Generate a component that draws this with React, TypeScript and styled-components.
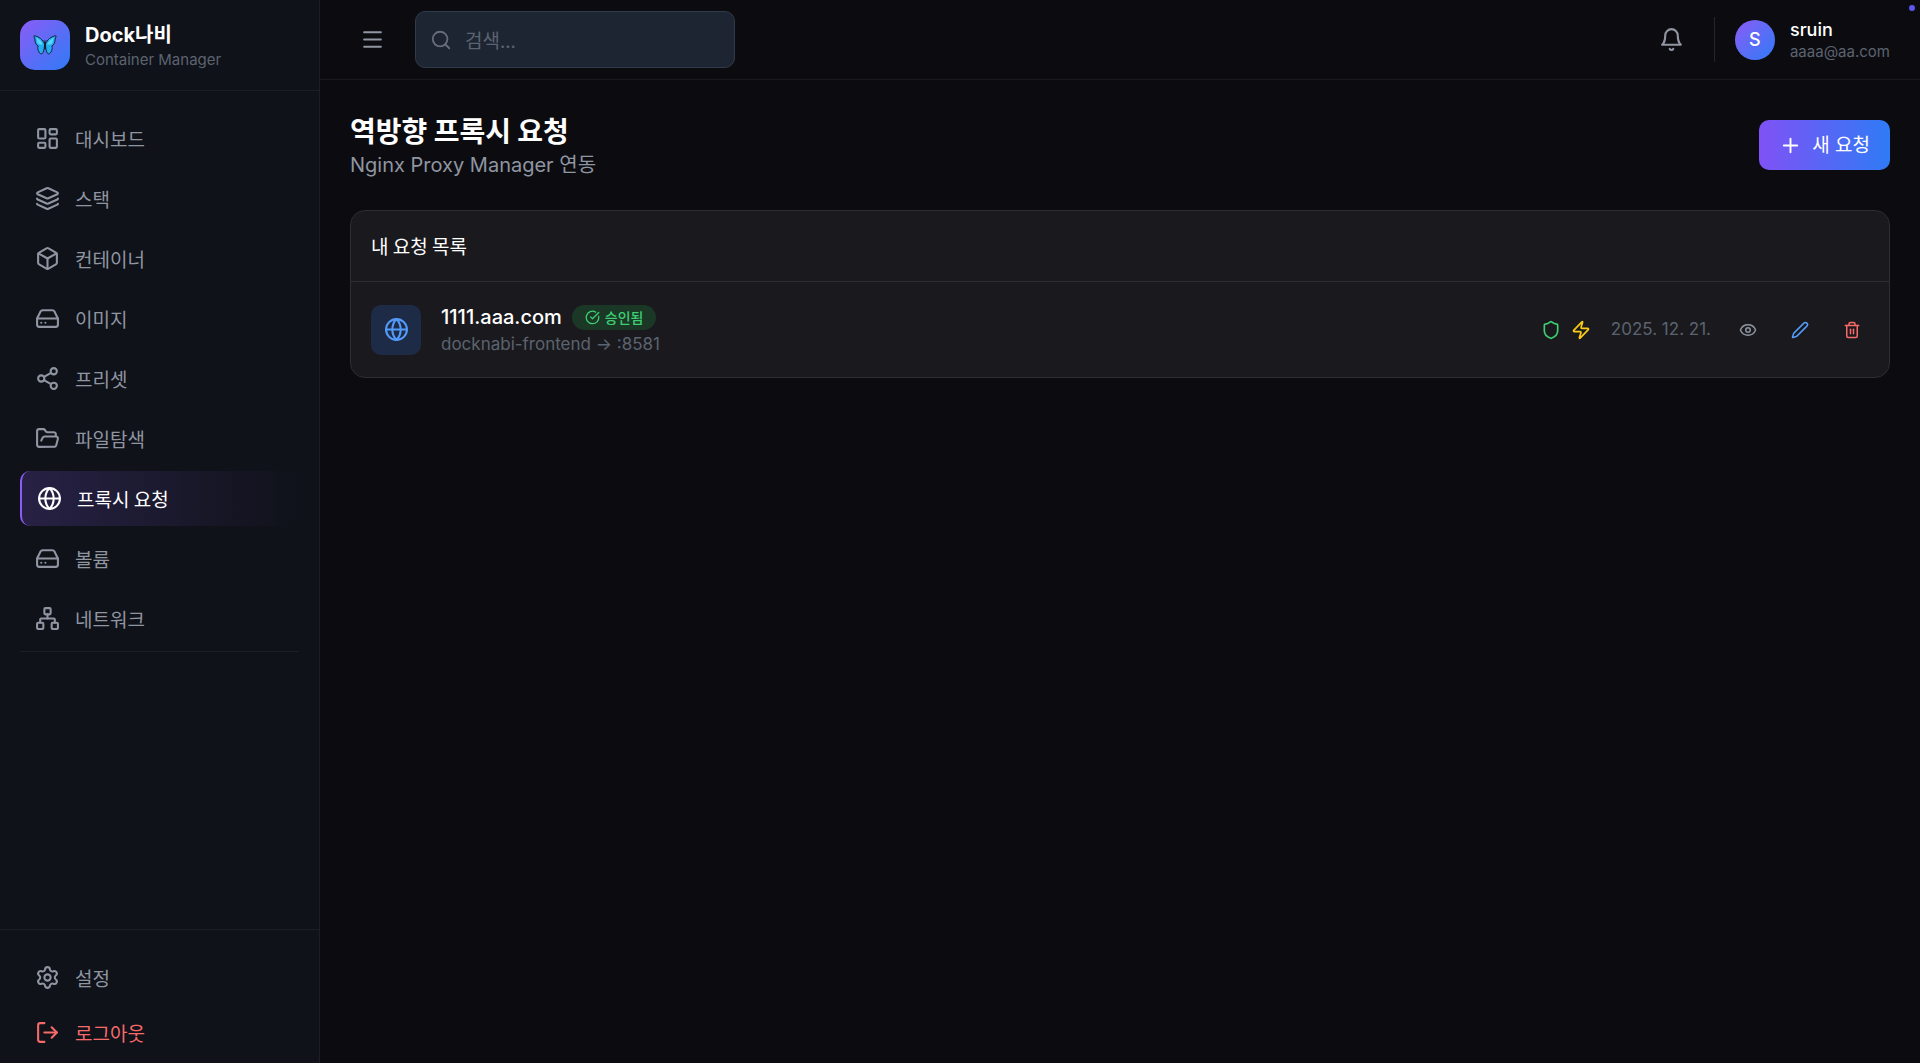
import React from "react";
import styled, { createGlobalStyle, css } from "styled-components";
import {
  LayoutDashboard,
  Layers,
  Box,
  HardDrive,
  Share2,
  FolderOpen,
  Globe,
  Network,
  Settings,
  LogOut,
  Menu,
  Search,
  Plus,
  CircleCheckBig,
  Shield,
  Zap,
  Eye,
  Pen,
  Trash2,
} from "lucide-react";

const hangul = `"Noto Sans CJK KR", sans-serif`;

const GlobalStyle = createGlobalStyle`
  * { box-sizing: border-box; margin: 0; padding: 0; }
  body {
    background: #0c0c10;
    color: #ffffff;
    font-family: Inter, "Noto Sans CJK KR", sans-serif;
    font-size: 17px;
    line-height: 25px;
  }
  button, input { font: inherit; color: inherit; border: 0; background: none; }
  button { cursor: pointer; }
  a { color: inherit; text-decoration: none; }
  ul { list-style: none; }
  svg { display: block; flex: none; }
`;

const Shell = styled.div`
  display: flex;
  min-height: 100vh;
`;

const Sidebar = styled.aside`
  display: flex;
  flex-direction: column;
  flex: none;
  width: 320px;
  height: 100vh;
  background: #0f1219;
  border-right: 1px solid #1b1e25;
`;

const Brand = styled.div`
  display: flex;
  align-items: center;
  gap: 15px;
  padding: 20px;
  border-bottom: 1px solid #1b1e25;
`;

const Logo = styled.div`
  display: grid;
  place-items: center;
  width: 50px;
  height: 50px;
  border-radius: 15px;
  background: linear-gradient(135deg, #8b5cf6, #2f7bf6);
`;

const BrandName = styled.p`
  font-size: 20px;
  line-height: 30px;
  font-weight: 700;
`;

const Caption = styled.p`
  font-size: 15px;
  line-height: 20px;
  color: #5c6370;
`;

const Nav = styled.nav`
  flex: 1;
  padding: 20px;
`;

const NavList = styled.ul`
  display: flex;
  flex-direction: column;
  gap: 5px;
`;

const NavDivider = styled.hr`
  margin-top: 5px;
  border: 0;
  border-top: 1px solid #1b1e25;
`;

const navItem = css`
  display: flex;
  align-items: center;
  gap: 15px;
  width: 100%;
  padding: 15px;
  border-radius: 10px;
  font-family: ${hangul};
  font-size: 19px;
`;

const NavLink = styled.a<{ $active?: boolean }>`
  ${navItem}
  color: #8f95a1;
  ${({ $active }) =>
    $active &&
    css`
      color: #ffffff;
      border-left: 2px solid #8b5cf6;
      background: linear-gradient(90deg, rgba(139, 92, 246, 0.2), transparent);
    `}
`;

const LogoutButton = styled.button`
  ${navItem}
  color: #f86a6a;
`;

const SidebarFooter = styled.div`
  padding: 20px 20px 3px;
  border-top: 1px solid #1b1e25;
`;

const Content = styled.div`
  flex: 1;
  min-width: 0;
`;

const Topbar = styled.header`
  display: flex;
  align-items: center;
  justify-content: space-between;
  height: 80px;
  padding: 0 30px;
  border-bottom: 1px solid #1a1a1e;
`;

const Group = styled.div<{ $gap: number }>`
  display: flex;
  align-items: center;
  gap: ${({ $gap }) => $gap}px;
`;

const IconButton = styled.button`
  padding: 10px;
  color: #8f95a1;
`;

const SearchBox = styled.label`
  display: flex;
  align-items: center;
  gap: 13px;
  width: 320px;
  padding: 15px 14px;
  border: 1px solid #2f3a4a;
  border-radius: 10px;
  background: #1d2533;
  color: #666d79;
  font-family: ${hangul};
  font-size: 19px;
`;

const SearchInput = styled.input`
  flex: 1;
  min-width: 0;
  height: 25px;
  outline: 0;
  &::placeholder { color: #5c6370; opacity: 1; }
`;

const Profile = styled.div`
  display: flex;
  align-items: center;
  gap: 15px;
  padding-left: 20px;
  border-left: 1px solid #25252a;
`;

const Avatar = styled.div`
  display: grid;
  place-items: center;
  width: 40px;
  height: 40px;
  border-radius: 50%;
  background: linear-gradient(135deg, #8b5cf6, #2f7bf6);
  font-size: 18px;
  font-weight: 500;
`;

const UserName = styled.p`
  font-size: 18px;
  font-weight: 500;
`;

const StatusDot = styled.span`
  position: fixed;
  top: 5px;
  right: 5px;
  width: 6px;
  height: 6px;
  border-radius: 50%;
  background: #5b57f0;
`;

const Main = styled.main`
  padding: 30px;
`;

const PageHead = styled.div`
  display: flex;
  align-items: center;
  justify-content: space-between;
  margin-bottom: 30px;
`;

const Title = styled.h1`
  font-family: ${hangul};
  font-size: 28px;
  line-height: 40px;
  font-weight: 700;
`;

const Subtitle = styled.p`
  font-size: 20px;
  line-height: 30px;
  color: #8f95a1;
`;

const PrimaryButton = styled.button`
  display: flex;
  align-items: center;
  gap: 10px;
  height: 50px;
  padding: 0 20px;
  border-radius: 10px;
  background: linear-gradient(90deg, #8052f5, #2f7bf6);
  font-size: 19px;
`;

const Card = styled.section`
  border: 1px solid #2e2e32;
  border-radius: 15px;
  background: #1a1a1e;
`;

const CardTitle = styled.h2`
  padding: 20px;
  border-bottom: 1px solid #2e2e32;
  font-family: ${hangul};
  font-size: 19px;
  line-height: 30px;
  font-weight: 400;
`;

const Row = styled.div`
  display: flex;
  align-items: center;
  justify-content: space-between;
  padding: 20px;
`;

const Tile = styled.div`
  display: grid;
  place-items: center;
  width: 50px;
  height: 50px;
  border-radius: 10px;
  background: #1e2b47;
  color: #539bfa;
`;

const Domain = styled.p`
  font-size: 20px;
  line-height: 30px;
  font-weight: 500;
`;

const Target = styled.p`
  color: #5c6370;
`;

const Badge = styled.span`
  display: flex;
  align-items: center;
  gap: 5px;
  height: 25px;
  padding: 0 13px;
  border-radius: 13px;
  background: #1b3827;
  color: #3fcf73;
  font-size: 14px;
  font-weight: 500;
`;

const DateText = styled.time`
  color: #5c6370;
`;

const RowAction = styled.button<{ $color: string }>`
  padding: 8px;
  color: ${({ $color }) => $color};
`;

const Butterfly = () => (
  <svg width="24" height="20" viewBox="0 0 24 20" aria-hidden="true">
    <g stroke="#15243d" strokeWidth="1" strokeLinejoin="round" fill="#22aef0">
      <path d="M11.500 9C10 5 6 1.200 1 .8c-.4 1 .6 1.600.8 3.200.3 3 .8 6 3.400 7 -.8 1.600-.4 4 .8 6 .8 1.600 2.200 2.400 3.200 1.600 1.500-1.200 2-5 2.300-7.600Z" />
      <path d="M12.500 9C14 5 18 1.200 23 .8c.4 1-.6 1.600-.8 3.200-.3 3-.8 6-3.400 7 .8 1.600.4 4-.8 6-.8 1.600-2.200 2.400-3.200 1.600-1.500-1.200-2-5-2.300-7.600Z" />
    </g>
    <g fill="#5ad5fc">
      <path d="M3.400 2.800C6.200 4 8.800 6.800 10 9.600 7.400 10 5 9 4.300 7Z" />
      <path d="M20.600 2.800C17.800 4 15.200 6.800 14 9.600c2.600.4 5-.6 5.700-2.600Z" />
    </g>
    <path d="M12 7.500v6" stroke="#1b1b22" strokeWidth="1.600" strokeLinecap="round" />
    <path d="M12 7.500 10.800 5M12 7.500 13.200 5" stroke="#1b1b22" strokeWidth=".6" />
  </svg>
);

const BellIcon = () => (
  <svg width="25" height="25" viewBox="0 0 24 24" fill="none" stroke="currentColor" strokeWidth="2" strokeLinecap="round" strokeLinejoin="round" aria-hidden="true">
    <path d="M6 8a6 6 0 0 1 12 0c0 7 3 9 3 9H3s3-2 3-9" />
    <path d="M10.300 21a1.940 1.940 0 0 0 3.400 0" />
  </svg>
);

const NAV = [
  { label: "대시보드", Icon: LayoutDashboard },
  { label: "스택", Icon: Layers },
  { label: "컨테이너", Icon: Box },
  { label: "이미지", Icon: HardDrive },
  { label: "프리셋", Icon: Share2 },
  { label: "파일탐색", Icon: FolderOpen },
  { label: "프록시 요청", Icon: Globe, active: true },
  { label: "볼륨", Icon: HardDrive },
  { label: "네트워크", Icon: Network },
];

export default function App() {
  return (
    <>
      <GlobalStyle />
      <Shell>
        <Sidebar>
          <Brand>
            <Logo><Butterfly /></Logo>
            <div>
              <BrandName>Dock나비</BrandName>
              <Caption>Container Manager</Caption>
            </div>
          </Brand>
          <Nav>
            <NavList>
              {NAV.map(({ label, Icon, active }) => (
                <li key={label}>
                  <NavLink href="#" $active={active} aria-current={active ? "page" : undefined}>
                    <Icon size={25} />
                    {label}
                  </NavLink>
                </li>
              ))}
            </NavList>
            <NavDivider />
          </Nav>
          <SidebarFooter>
            <NavLink href="#"><Settings size={25} />설정</NavLink>
            <LogoutButton type="button"><LogOut size={25} />로그아웃</LogoutButton>
          </SidebarFooter>
        </Sidebar>
        <Content>
          <Topbar>
            <Group $gap={20}>
              <IconButton type="button" aria-label="메뉴"><Menu size={25} /></IconButton>
              <SearchBox>
                <Search size={22} />
                <SearchInput type="search" placeholder="검색..." aria-label="검색" />
              </SearchBox>
            </Group>
            <Group $gap={20}>
              <IconButton type="button" aria-label="알림"><BellIcon /></IconButton>
              <Profile>
                <Avatar>S</Avatar>
                <div>
                  <UserName>sruin</UserName>
                  <Caption>aaaa@aa.com</Caption>
                </div>
              </Profile>
            </Group>
          </Topbar>
          <Main>
            <PageHead>
              <div>
                <Title>역방향 프록시 요청</Title>
                <Subtitle>Nginx Proxy Manager 연동</Subtitle>
              </div>
              <PrimaryButton type="button"><Plus size={23} />새 요청</PrimaryButton>
            </PageHead>
            <Card>
              <CardTitle>내 요청 목록</CardTitle>
              <Row>
                <Group $gap={20}>
                  <Tile><Globe size={25} /></Tile>
                  <div>
                    <Group $gap={10}>
                      <Domain>1111.aaa.com</Domain>
                      <Badge><CircleCheckBig size={15} />승인됨</Badge>
                    </Group>
                    <Target>docknabi-frontend → :8581</Target>
                  </div>
                </Group>
                <Group $gap={20}>
                  <Group $gap={10}>
                    <Shield size={20} color="#3fcf73" />
                    <Zap size={20} color="#facc15" />
                  </Group>
                  <DateText dateTime="2025-12-21">2025. 12. 21.</DateText>
                  <Group $gap={18}>
                    <RowAction type="button" $color="#8f95a1" aria-label="보기"><Eye size={18} /></RowAction>
                    <RowAction type="button" $color="#539bfa" aria-label="수정"><Pen size={18} /></RowAction>
                    <RowAction type="button" $color="#f86a6a" aria-label="삭제"><Trash2 size={18} /></RowAction>
                  </Group>
                </Group>
              </Row>
            </Card>
          </Main>
        </Content>
      </Shell>
      <StatusDot />
    </>
  );
}
